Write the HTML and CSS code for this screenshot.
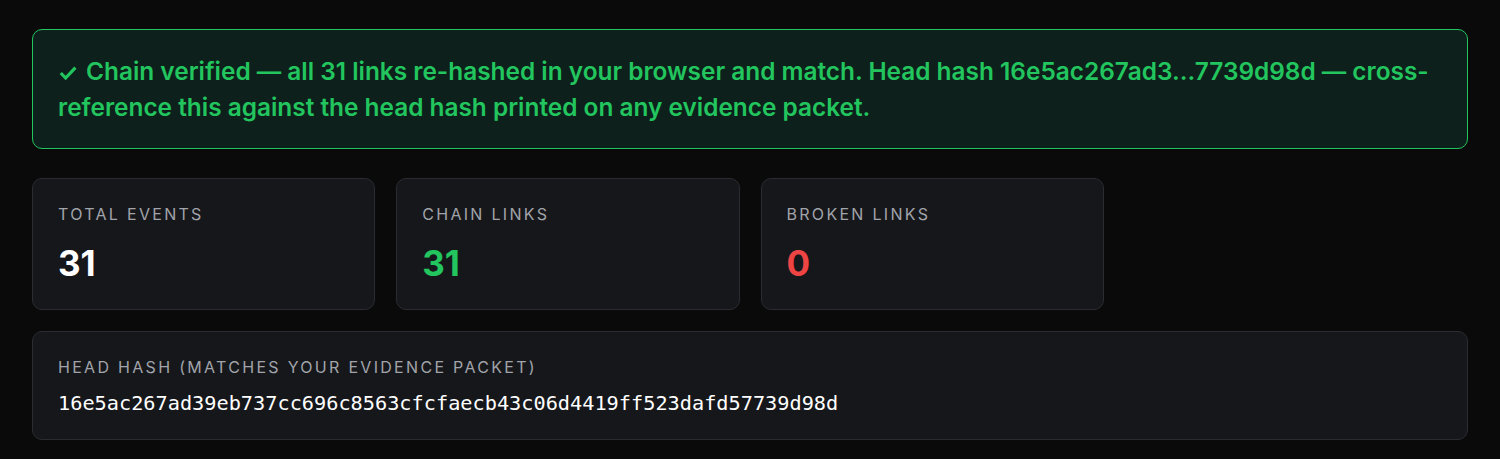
FILE: index.html
```html
<!DOCTYPE html>
<html lang="en">
<head>
  <meta charset="UTF-8">
  <meta name="viewport" content="width=device-width, initial-scale=1.0">
  <link rel="stylesheet" href="styles.css">
  <title>Chain Verification</title>
</head>
<body>
  <div class="container">
    <div class="verified">
      <svg class="tick" width="18" height="14" viewBox="0 0 18 14"><path d="M1.8 7 L6.6 12 L16.4 1.6" fill="none" stroke="currentColor" stroke-width="3.2"/></svg>Chain verified — all 31 links re-hashed in your browser and match. Head hash 16e5ac267ad3...7739d98d — cross-reference this against the head hash printed on any evidence packet.
    </div>
    <div class="stats">
      <div class="stat">
        <div class="label">Total Events</div>
        <div class="value">31</div>
      </div>
      <div class="stat">
        <div class="label">Chain Links</div>
        <div class="value ok">31</div>
      </div>
      <div class="stat">
        <div class="label">Broken Links</div>
        <div class="value bad">0</div>
      </div>
    </div>
    <div class="hash-card">
      <div class="label">Head Hash (matches your evidence packet)</div>
      <div class="hash">16e5ac267ad39eb737cc696c8563cfcfaecb43c06d4419ff523dafd57739d98d</div>
    </div>
  </div>
</body>
</html>
```

FILE: styles.css
```css
body {
  font-family: Inter, "Noto Sans", Arial, sans-serif;
  background-color: #0a0a0b;
  color: #f3f4f6;
  margin: 0;
}

.container {
  padding: 29px 32px;
}

.verified {
  background-color: #0d201b;
  border: 1px solid #22c55e;
  border-radius: 10px;
  padding: 23px 25px 23px;
  color: #22c55e;
  font-size: 24.4px;
  font-weight: 600;
  line-height: 36px;
}

.tick {
  margin: 0 9px 0 1px;
  vertical-align: 0;
}

.stats {
  display: grid;
  grid-template-columns: repeat(4, 1fr);
  gap: 21px;
  margin-top: 29px;
}

.stat, .hash-card {
  background-color: #16171b;
  border: 1px solid #2a2c31;
  border-radius: 10px;
}

.stat {
  padding: 25px 25px 24px;
  height: 132px;
  box-sizing: border-box;
}

.label {
  font-size: 16px;
  letter-spacing: 2.3px;
  text-transform: uppercase;
  color: #a1a4aa;
  line-height: 20px;
}

.value {
  font-size: 35px;
  font-weight: 700;
  margin-top: 17px;
  line-height: 44px;
  color: #ffffff;
}

.value.ok {
  color: #22c55e;
}

.value.bad {
  color: #ef4444;
}

.hash-card {
  margin-top: 21px;
  padding: 25px 25px 22px;
}

.hash {
  font-family: "DejaVu Sans Mono", "Liberation Mono", monospace;
  font-size: 20.25px;
  margin-top: 12px;
  line-height: 28px;
  color: #ffffff;
}
```
